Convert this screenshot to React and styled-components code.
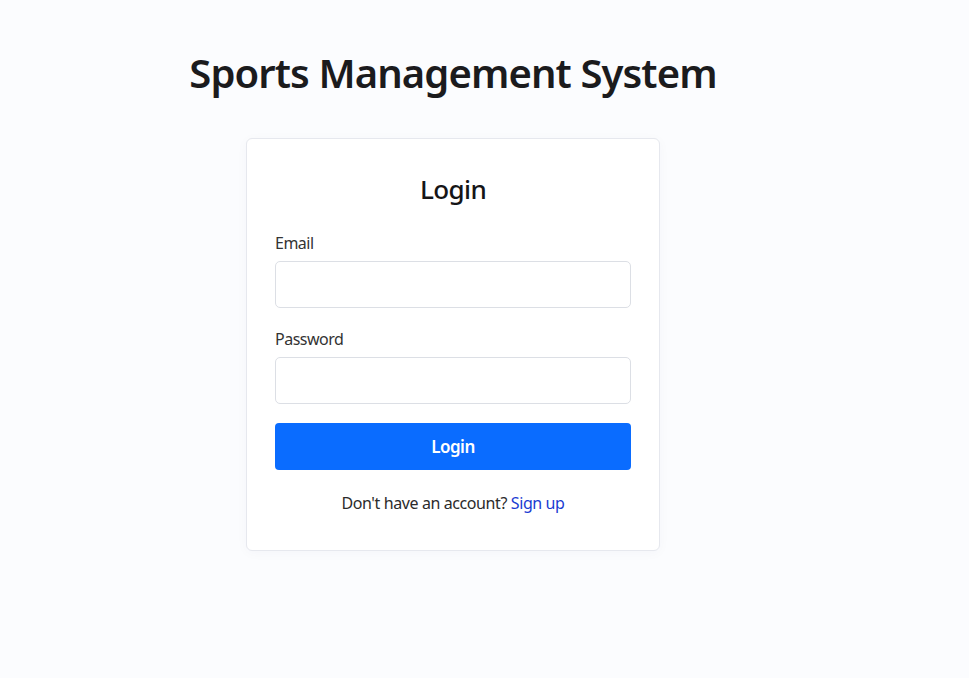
import React from 'react';
import styled, { createGlobalStyle } from 'styled-components';

const GlobalStyle = createGlobalStyle`
  html, body {
    margin: 0;
    padding: 0;
    background: #fbfcfe;
    font-family: "Noto Sans", "Open Sans", sans-serif;
  }
`;

const Page = styled.div`
  width: 906px;
  min-height: 678px;
  display: flex;
  flex-direction: column;
  align-items: center;
  box-sizing: border-box;
  padding-top: 44px;
`;

const Title = styled.h1`
  margin: 0;
  font-size: 40px;
  font-weight: 600;
  color: #1b1b1d;
  line-height: 58px;
  letter-spacing: -0.9px;
`;

const Card = styled.div`
  width: 414px;
  margin-top: 36px;
  background: #fff;
  border: 1px solid #e6e8ee;
  border-radius: 6px;
  box-shadow: 0 2px 12px rgba(30, 40, 80, 0.03);
  padding: 30px 28px 35px;
  box-sizing: border-box;
  display: flex;
  flex-direction: column;
`;

const CardTitle = styled.h2`
  margin: 0 0 22px;
  text-align: center;
  font-size: 26px;
  font-weight: 500;
  color: #151517;
  line-height: 40px;
  letter-spacing: -0.6px;
`;

const Field = styled.div`
  display: flex;
  flex-direction: column;
  margin-bottom: 19px;
`;

const Label = styled.label`
  font-size: 16px;
  color: #333;
  line-height: 24px;
  margin-bottom: 6px;
  letter-spacing: -0.5px;
`;

const Input = styled.input`
  height: 47px;
  border: 1px solid #dcdfe5;
  border-radius: 5px;
  background: #fff;
  box-sizing: border-box;
  padding: 0 12px;
  font-size: 16px;
  font-family: inherit;
  outline: none;
`;

const Button = styled.button`
  height: 47px;
  border: none;
  border-radius: 4px;
  background: #0a6cff;
  color: #fff;
  font-family: inherit;
  font-size: 17px;
  font-weight: 600;
  letter-spacing: -0.5px;
  cursor: pointer;
`;

const Footer = styled.p`
  margin: 21px 0 0;
  text-align: center;
  font-size: 16px;
  color: #2b2b2b;
  line-height: 24px;
  letter-spacing: -0.4px;
`;

const Link = styled.a`
  color: #1a3bd2;
  text-decoration: none;
`;

export default function App() {
  return (
    <>
      <GlobalStyle />
      <Page>
        <Title>Sports Management System</Title>
        <Card>
          <CardTitle>Login</CardTitle>
          <Field>
            <Label>Email</Label>
            <Input type="email" />
          </Field>
          <Field>
            <Label>Password</Label>
            <Input type="password" />
          </Field>
          <Button>Login</Button>
          <Footer>
            Don't have an account? <Link href="#">Sign up</Link>
          </Footer>
        </Card>
      </Page>
    </>
  );
}
